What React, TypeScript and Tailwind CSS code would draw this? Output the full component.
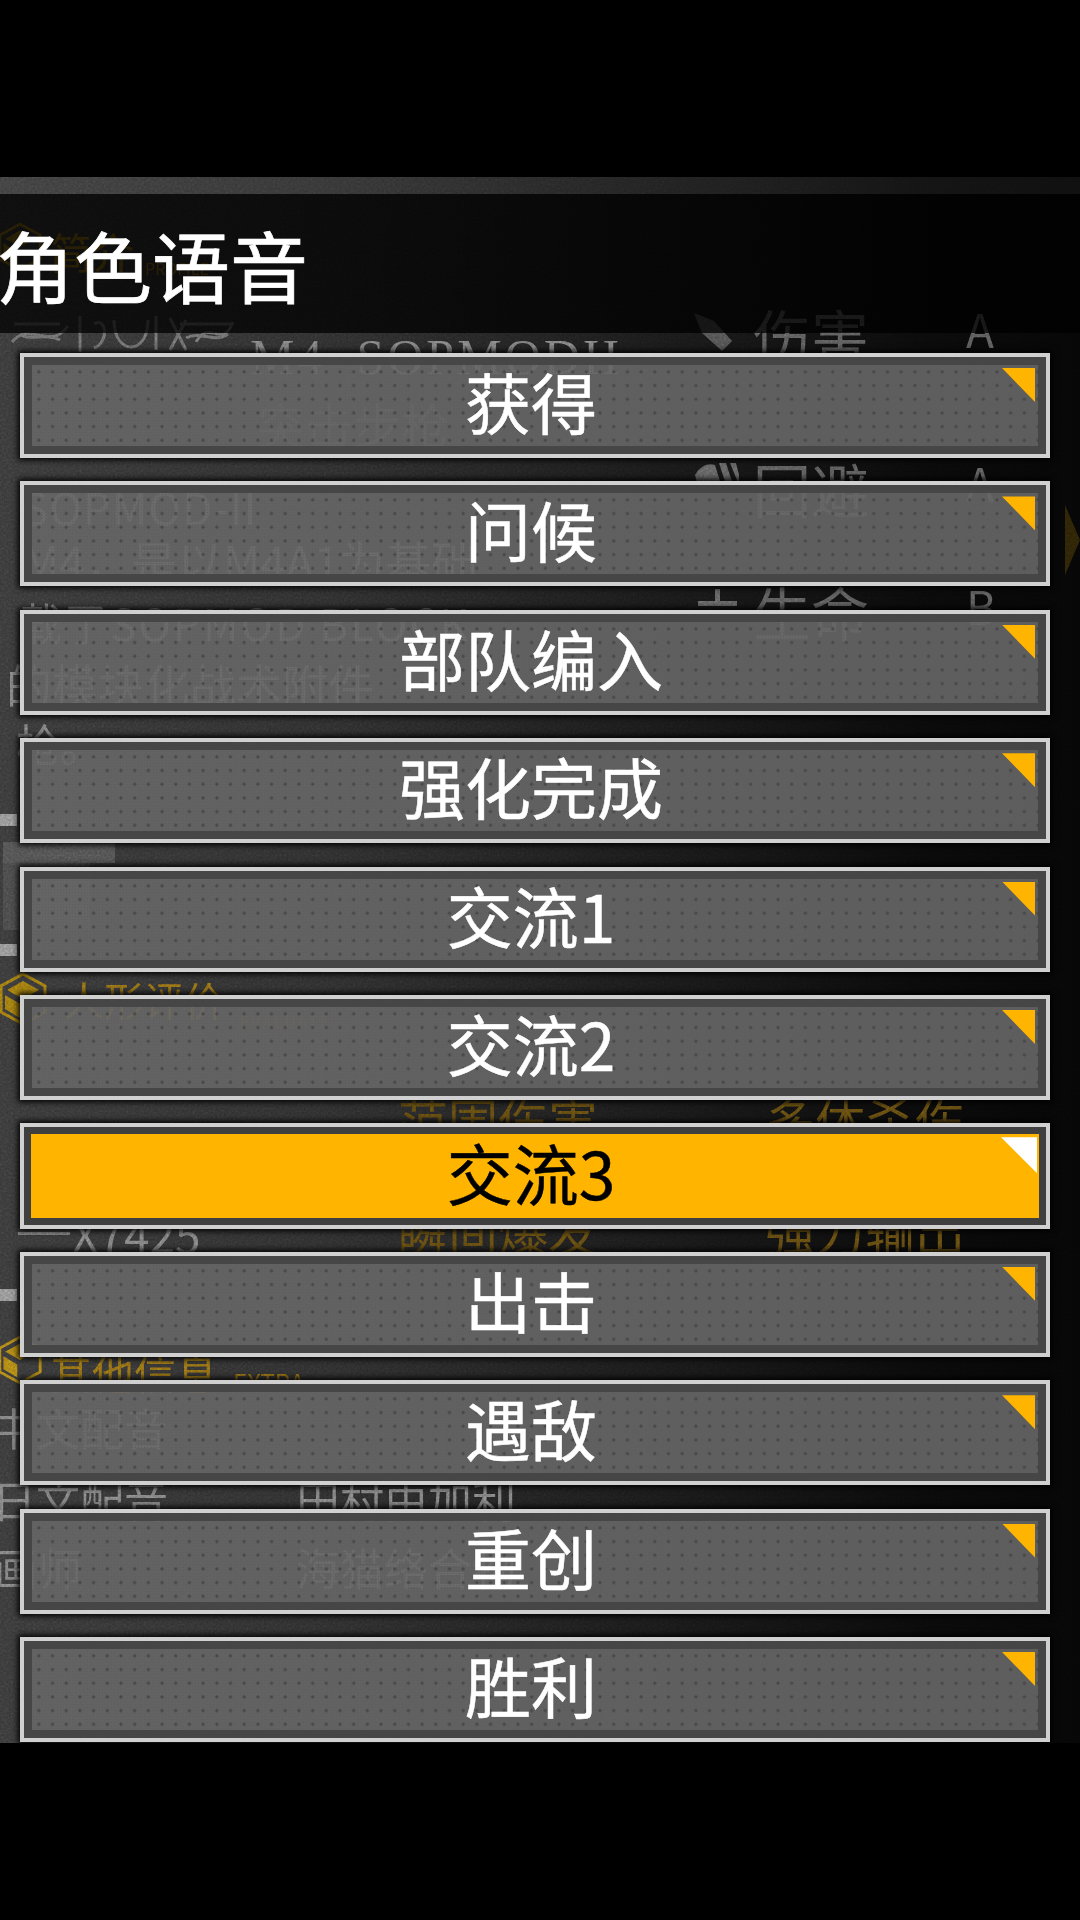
const CJK = `font-['Noto_Sans_CJK_SC','Noto_Sans',sans-serif]`

const voices = ['获得', '问候', '部队编入', '强化完成', '交流1', '交流2', '交流3', '出击', '遇敌', '重创', '胜利']

const grey = 'leading-none whitespace-nowrap text-[#767676]'
const stat = 'leading-none whitespace-nowrap text-[#555555]'
const gold = 'leading-none whitespace-nowrap text-[#8a6814]'
const dim = 'leading-none whitespace-nowrap text-[#5c4610]'

function Hex({ className }: { className: string }) {
  return (
    <svg viewBox="0 0 48 54" className={className}>
      <path d="M24 2 46 14V40L24 52 2 40V14Z" fill="none" stroke="currentColor" strokeWidth="3" />
      <path d="M24 9 40 18 24 27 8 18Z" fill="currentColor" />
      <path d="M6 23 21 32V46L6 37Z" fill="currentColor" />
    </svg>
  )
}

function Stat({ icon, name, rank, className, children }: { icon: React.ReactNode; name: string; rank: string; className: string; children?: React.ReactNode }) {
  return (
    <div className={`flex items-start ${className}`}>
      <div className="w-[61px] shrink-0">{icon}</div>
      <span className={`${stat} w-[213px] text-[58px]`}>{name}</span>
      <span className={`${stat} text-[46px]`}>{rank}</span>
      {children}
    </div>
  )
}

// the dimmed character page behind the menu
function Backdrop() {
  return (
    <div className={`absolute inset-0 flex flex-col overflow-hidden ${CJK}`}>
      {/* 简介 */}
      <div className="flex items-start h-[125px] pt-[45px] shrink-0">
        <Hex className="-ml-[2px] w-[44px] h-[50px] text-[#8a6a15]" />
        <span className={`${gold} ml-[8px] mt-[8px] text-[42px]`}>简介</span>
        <span className={`${gold} ml-[11px] mt-[38px] text-[16px]`}>PROFILE</span>
      </div>

      <div className="flex h-[463px] shrink-0">
        <div className="flex flex-col w-[692px] shrink-0">
          <div className="flex items-start pt-[10px]">
            <svg viewBox="0 0 225 44" className="ml-[10px] w-[225px] h-[44px] text-[#666666]" fill="none" stroke="currentColor" strokeWidth="3">
              <path d="M2 30C20 8 40 40 58 14M70 4V40M84 12C96 4 100 30 84 36M104 8C104 44 138 44 138 8M146 4V38M160 6 176 38M176 8 160 38M186 30C200 6 212 38 223 10" />
              <path d="M4 12H50M170 12H222M10 22C20 30 36 20 50 28M176 26C190 18 204 32 218 22" />
            </svg>
            <div className="flex flex-col ml-[15px] pt-[20px]">
              <span className="leading-none whitespace-nowrap text-[50px] tracking-[3px] text-[#767676] font-['Liberation_Serif',serif]">M4&nbsp;&nbsp;SOPMODII</span>
              <span className="leading-none whitespace-nowrap text-[48px] text-[#4c4c4c] ml-[7px] mt-[17px]">突击步枪</span>
            </div>
          </div>
          <span className={`${grey} ml-[22px] mt-[37px] text-[44px] tracking-[1px]`}>SOPMOD-II</span>
          <span className={`${grey} ml-[22px] mt-[9px] text-[46px]`}>M4，是以M4A1为基础</span>
          <span className={`${grey} ml-[18px] mt-[17px] text-[44px] tracking-[2px]`}>载了SOPMOD BLOCK</span>
          <span className={`${grey} ml-[6px] mt-[16px] text-[46px]`}>的模块化战术附件</span>
          <span className={`${grey} ml-[16px] mt-[15px] text-[44px]`}>枪。</span>
        </div>

        <div className="flex flex-col flex-1 pt-[3px]">
          <Stat
            className="h-[154px]"
            name="伤害"
            rank="A"
            icon={
              <svg viewBox="0 0 44 44" className="w-[44px] h-[48px] mt-[4px] text-[#4c4c4c]" fill="currentColor">
                <path d="M2 2 22 10 40 30 30 40 10 22Z" />
              </svg>
            }
          />
          <Stat
            className="h-[123px]"
            name="回避"
            rank="A"
            icon={
              <svg viewBox="0 0 44 30" className="ml-[3px] w-[44px] h-[34px] text-[#5c5c5c]" fill="currentColor">
                <path d="M0 14C6 4 14 2 20 4L28 30H4ZM24 2H31L40 30H33ZM35 2H41L44 14V24Z" />
              </svg>
            }
          >
            <svg viewBox="0 0 15 70" className="ml-auto mt-[46px] w-[15px] h-[70px] text-[#2a2106]" fill="currentColor">
              <path d="M0 0 15 35 0 70Z" />
            </svg>
          </Stat>
          <Stat
            className="h-[120px]"
            name="生命"
            rank="B"
            icon={
              <svg viewBox="0 0 44 30" className="ml-[3px] mt-[7px] w-[44px] h-[30px] text-[#5c5c5c]" fill="currentColor">
                <path d="M20 0H25V12H42V17H3V12H20Z" />
              </svg>
            }
          />
        </div>
      </div>

      {/* left hand panels */}
      <div className="mt-[49px] w-[17px] h-[12px] shrink-0 bg-[#8a8a8a]" />
      <div className="mt-[16px] ml-[3px] w-[87px] h-[88px] shrink-0 bg-[#444444]">
        <div className="w-[112px] h-[21px] bg-[#4c4c4c]" />
      </div>
      <div className="mt-[14px] w-[17px] h-[12px] shrink-0 bg-[#8a8a8a]" />

      <div className="flex items-start mt-[16px] h-[54px] shrink-0">
        <Hex className="-ml-[1px] w-[48px] h-[54px] text-[#96720f]" />
        <span className={`${gold} ml-[17px] mt-[7px] text-[40px]`}>人形评价</span>
        <span className={`${dim} ml-[16px] mt-[41px] text-[16px] tracking-[2px]`}>EVALUATE</span>
      </div>

      <div className="flex mt-[68px] pl-[398px] shrink-0">
        <span className={`${dim} w-[367px] text-[50px]`}>范围伤害</span>
        <span className={`${dim} text-[50px]`}>多体杀伤</span>
      </div>
      <div className="flex mt-[60px] shrink-0">
        <div className="flex items-start w-[398px] pl-[18px]">
          <div className="w-[52px] h-[3px] mt-[28px] bg-[#767676]" />
          <span className={`${grey} ml-[2px] mt-[6px] text-[46px]`}>X7425</span>
        </div>
        <span className={`${dim} w-[367px] text-[50px]`}>瞬间爆发</span>
        <span className={`${dim} text-[50px]`}>强力输出</span>
      </div>

      <div className="mt-[33px] w-[17px] h-[12px] shrink-0 bg-[#8a8a8a]" />

      <div className="flex items-start mt-[32px] shrink-0">
        <Hex className="-ml-[2px] w-[44px] h-[54px] text-[#a67c14]" />
        <span className={`${gold} ml-[8px] mt-[18px] text-[42px]`}>其他信息</span>
        <span className={`${gold} ml-[15px] mt-[37px] text-[24px]`}>EXTRA</span>
      </div>

      <span className={`${grey} -ml-[8px] mt-[11px] text-[44px]`}>中文配音</span>
      <div className="flex mt-[28px] -ml-[8px] shrink-0">
        <span className={`${grey} w-[304px] text-[44px]`}>日文配音</span>
        <span className={`${grey} text-[44px]`}>田村由加利</span>
      </div>
      <div className="flex mt-[24px] -ml-[6px] shrink-0">
        <span className={`${grey} w-[302px] text-[44px]`}>画师</span>
        <span className={`${grey} text-[44px]`}>海猫络合物</span>
      </div>

      {/* grain */}
      <svg className="absolute inset-0 w-full h-full opacity-70 mix-blend-overlay">
        <filter id="grain">
          <feTurbulence type="fractalNoise" baseFrequency="0.45" numOctaves="2" />
          <feColorMatrix type="saturate" values="0" />
        </filter>
        <rect width="100%" height="100%" filter="url(#grain)" />
      </svg>
    </div>
  )
}

function VoiceButton({ label, selected }: { label: string; selected?: boolean }) {
  return (
    <button className={`relative shrink-0 border-[4px] border-[#d0d0d0] shadow-[0_0_6px_2px_#000] ${selected ? 'h-[106px] -mb-px' : 'h-[105px]'}`}>
      <div
        className={
          selected
            ? 'h-full flex items-center justify-center pr-[8px] pb-[11px] border-[7px] border-[#3f3f3f] bg-[#ffb400] text-black'
            : "h-full flex items-center justify-center pr-[8px] pb-[11px] border-[8px] border-[#454545]/95 bg-[#676767]/90 text-white bg-[radial-gradient(circle,#484848_1.2px,transparent_2px),radial-gradient(circle,#5e5e5e_0.5px,transparent_1px)] bg-[size:13.7px_13.7px,3px_3px]"
        }
      >
        <span className="text-[66px] leading-none [-webkit-text-stroke:0.5px]">{label}</span>
      </div>
      {selected ? (
        <span className="absolute right-[9px] top-[10px] w-[36px] h-[36px] bg-white [clip-path:polygon(0_0,100%_0,100%_100%)]" />
      ) : (
        <span className="absolute right-[11px] top-[11px] w-[33px] h-[34px] bg-[#ffb400] [clip-path:polygon(0_0,100%_0,100%_100%)]" />
      )}
    </button>
  )
}

export default function App() {
  return (
    <div className={`w-[1080px] h-[1920px] bg-black pt-[177px] overflow-hidden ${CJK}`}>
      <div className="relative h-[1566px] overflow-hidden bg-[linear-gradient(90deg,#363636_0%,#2c2c2c_30%,#1c1c1c_55%,#0a0a0a_85%,#060606_100%)]">
        <Backdrop />
        <div className="relative flex flex-col">
          <div className="h-[17px] bg-white/[4%]" />
          <div className="h-[139px] flex items-center bg-black/75">
            <h1 className="-ml-[4px] text-[78px] leading-none text-white font-normal [-webkit-text-stroke:0.7px]">角色语音</h1>
          </div>
          <div className="flex flex-col gap-[23.4px] pt-[20px] pl-[20px] pr-[30px]">
            {voices.map((v, i) => (
              <VoiceButton key={v} label={v} selected={i === 6} />
            ))}
          </div>
        </div>
      </div>
    </div>
  )
}
